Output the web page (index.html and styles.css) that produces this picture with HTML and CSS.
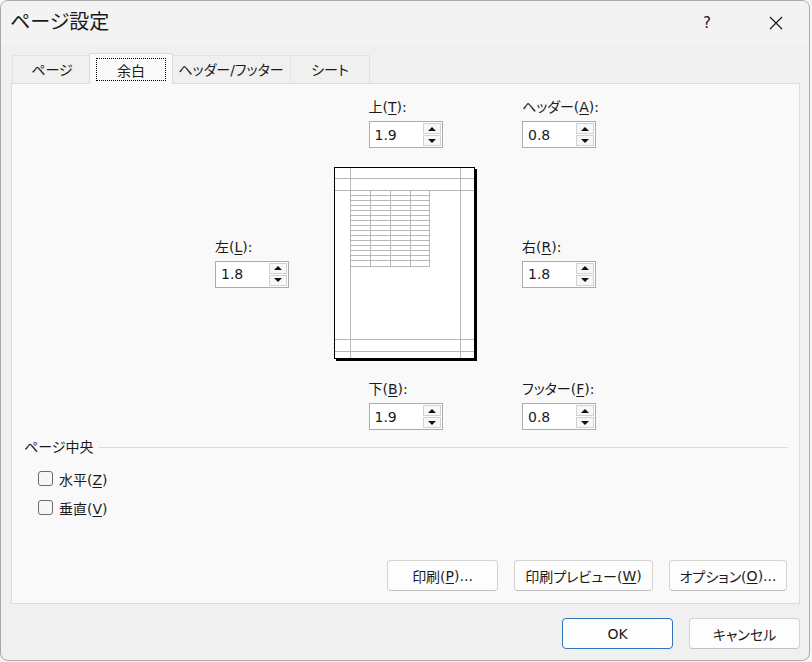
FILE: index.html
```html
<!DOCTYPE html>
<html lang="ja">
<head>
    <meta charset="UTF-8">
    <title>ページ設定</title>
    <link rel="stylesheet" href="styles.css">
</head>
<body>
    <div class="dialog">
        <div class="titlebar">
            <div class="title">ページ設定</div>
            <div class="tb-btn help">?</div>
            <div class="tb-btn close">
                <svg width="14" height="14" viewBox="0 0 14 14">
                    <path d="M1 1 L13 13 M13 1 L1 13" stroke="#1b1b1b" stroke-width="1.2" fill="none"/>
                </svg>
            </div>
        </div>

        <div class="tabs">
            <div class="tab t-page">ページ</div>
            <div class="tab sel"><span class="focus">余白</span></div>
            <div class="tab t-header">ヘッダー/フッター</div>
            <div class="tab t-sheet">シート</div>
        </div>

        <div class="panel">
            <div class="margins">
                <!-- row 1 -->
                <div></div>
                <div class="field center">
                    <label>上(<u>T</u>):</label>
                    <div class="spin"><span class="val">1.9</span><span class="arrows"><span class="up"></span><span class="down"></span></span></div>
                </div>
                <div class="field">
                    <label>ヘッダー(<u>A</u>):</label>
                    <div class="spin"><span class="val">0.8</span><span class="arrows"><span class="up"></span><span class="down"></span></span></div>
                </div>

                <!-- row 2 -->
                <div class="field mid">
                    <label>左(<u>L</u>):</label>
                    <div class="spin"><span class="val">1.8</span><span class="arrows"><span class="up"></span><span class="down"></span></span></div>
                </div>
                <svg class="preview" width="143" height="194" viewBox="0 0 143 194">
                    <rect x="0.5" y="0.5" width="140" height="191" fill="#fff"/>
                    <g stroke="#b7b7b7" stroke-width="1" fill="none" shape-rendering="crispEdges">
                        <path d="M16.5 1 V191 M126.5 1 V191 M1 11.5 H140 M1 23.5 H140 M1 172.5 H140 M1 184.5 H140"/>
                        <path d="M36.5 23 V100 M56.5 23 V100 M76.5 23 V100 M95.5 23 V100"/>
                        <path d="M16 28.5 H96 M16 33.5 H96 M16 38.5 H96 M16 43.5 H96 M16 48.5 H96 M16 53.5 H96 M16 58.5 H96 M16 63.5 H96 M16 68.5 H96 M16 73.5 H96 M16 78.5 H96 M16 83.5 H96 M16 88.5 H96 M16 93.5 H96 M16 99.5 H96"/>
                    </g>
                    <rect x="0.5" y="0.5" width="140" height="191" fill="none" stroke="#000" shape-rendering="crispEdges"/>
                    <rect x="141" y="2" width="2" height="192" fill="#000"/>
                    <rect x="2" y="192" width="141" height="2" fill="#000"/>
                </svg>
                <div class="field mid">
                    <label>右(<u>R</u>):</label>
                    <div class="spin"><span class="val">1.8</span><span class="arrows"><span class="up"></span><span class="down"></span></span></div>
                </div>

                <!-- row 3 -->
                <div></div>
                <div class="field center bottom">
                    <label>下(<u>B</u>):</label>
                    <div class="spin"><span class="val">1.9</span><span class="arrows"><span class="up"></span><span class="down"></span></span></div>
                </div>
                <div class="field bottom">
                    <label>フッター(<u>F</u>):</label>
                    <div class="spin"><span class="val">0.8</span><span class="arrows"><span class="up"></span><span class="down"></span></span></div>
                </div>
            </div>

            <div class="group">
                <div class="group-head"><span>ページ中央</span><span class="rule"></span></div>
                <div class="check first"><span class="box"></span><span>水平(<u>Z</u>)</span></div>
                <div class="check"><span class="box"></span><span>垂直(<u>V</u>)</span></div>
            </div>

            <div class="panel-buttons">
                <div class="btn b-print">印刷(<u>P</u>)...</div>
                <div class="btn b-preview">印刷プレビュー(<u>W</u>)</div>
                <div class="btn b-options">オプション(<u>O</u>)...</div>
            </div>
        </div>

        <div class="footer">
            <div class="btn ok">OK</div>
            <div class="btn">キャンセル</div>
        </div>
    </div>
</body>
</html>
```

FILE: styles.css
```css
* {
    box-sizing: border-box;
}

body {
    margin: 0;
    background-color: #f4f4f4;
    font-family: "DejaVu Sans", "Noto Sans CJK JP", sans-serif;
    font-size: 14px;
    color: #1b1b1b;
    font-feature-settings: "palt";
}

u {
    text-decoration-thickness: 1px;
    text-underline-offset: 2px;
}

.dialog {
    width: 810px;
    height: 661px;
    border: 1px solid #a9a9a9;
    border-radius: 8px;
    background-color: #f0f0f0;
    display: flex;
    flex-direction: column;
    overflow: hidden;
}

/* title bar */
.titlebar {
    height: 43px;
    flex-shrink: 0;
    background-color: #f3f3f3;
    display: flex;
    align-items: center;
    padding-left: 9px;
}

.title {
    flex: 1;
    font-size: 20px;
    line-height: 1;
    padding-bottom: 2px;
}

.tb-btn {
    width: 46px;
    height: 43px;
    display: flex;
    align-items: center;
    justify-content: center;
}

.help {
    margin-right: 23px;
    font-size: 15px;
}

.close {
    margin-right: 10px;
}

/* tabs */
.tabs {
    height: 39px;
    flex-shrink: 0;
    display: flex;
    align-items: flex-end;
    padding-left: 11px;
}

.tab {
    height: 28px;
    border: 1px solid #e2e2e2;
    border-right: none;
    border-bottom: none;
    display: flex;
    align-items: center;
    justify-content: center;
    padding-bottom: 1px;
}

.t-page { width: 79px; }
.t-header { width: 119px; }
.t-sheet { width: 80px; border-right: 1px solid #e2e2e2; }

.tab.sel {
    width: 84px;
    height: 31px;
    margin: 0 -2px -1px -2px;
    padding: 4px 6px 3px 6px;
    background-color: #f9f9f9;
    border: 1px solid #dadada;
    border-bottom: none;
    position: relative;
    z-index: 1;
}

.focus {
    flex: 1;
    align-self: stretch;
    border: 1px dotted #000;
    display: flex;
    align-items: center;
    justify-content: center;
}

/* panel */
.panel {
    height: 521px;
    flex-shrink: 0;
    margin: 0 9px 0 10px;
    border: 1px solid #dcdcdc;
    background-color: #f9f9f9;
    display: flex;
    flex-direction: column;
}

.margins {
    margin: 13px 0 0 203px;
    display: grid;
    grid-template-columns: 74px 143px 74px;
    column-gap: 45px;
}

.field {
    width: 74px;
    display: flex;
    flex-direction: column;
    gap: 4px;
}

.field label {
    line-height: 20px;
    white-space: nowrap;
}

.field.center {
    justify-self: center;
}

.field.mid {
    align-self: center;
    margin-top: 15px;
}

.field.bottom {
    margin-top: 18px;
}

.preview {
    display: block;
    margin-top: 19px;
}

.spin {
    height: 27px;
    border: 1px solid #ababab;
    background-color: #fff;
    display: flex;
    align-items: center;
    padding-left: 5px;
}

.spin .val {
    flex: 1;
    font-size: 14px;
    line-height: 1;
}

.arrows {
    width: 18px;
    height: 23px;
    margin-right: 1px;
    display: flex;
    flex-direction: column;
    gap: 1px;
}

.arrows span {
    flex: 1;
    border: 1px solid #d2d2d2;
    background-color: #f7f7f7;
    display: flex;
    align-items: center;
    justify-content: center;
}

.arrows .up::after,
.arrows .down::after {
    content: "";
    width: 0;
    height: 0;
    border-left: 4px solid transparent;
    border-right: 4px solid transparent;
}

.arrows .up::after {
    border-bottom: 4px solid #111;
}

.arrows .down::after {
    border-top: 4px solid #111;
}

/* centering group */
.group {
    margin: 7px 11px 0 12px;
}

.group-head {
    display: flex;
    align-items: center;
    line-height: 20px;
}

.group-head .rule {
    flex: 1;
    border-top: 1px solid #dcdcdc;
    margin-left: 6px;
}

.check {
    height: 29px;
    margin-left: 14px;
    display: flex;
    align-items: center;
    gap: 6px;
}

.check.first {
    margin-top: 7px;
}

.box {
    width: 15px;
    height: 15px;
    border: 1px solid #6b6b6b;
    border-radius: 3px;
    background-color: #f7f7f7;
}

/* buttons */
.panel-buttons {
    margin-top: auto;
    display: flex;
    justify-content: flex-end;
    gap: 16px;
    padding: 0 12px 12px 0;
}

.btn {
    width: 111px;
    height: 31px;
    border: 1px solid #d3d3d3;
    border-bottom-color: #c2c2c2;
    border-radius: 4px;
    background-color: #fdfdfd;
    display: flex;
    align-items: center;
    justify-content: center;
    white-space: nowrap;
}

.b-preview { width: 139px; }
.b-options { width: 118px; }

.footer {
    display: flex;
    justify-content: flex-end;
    gap: 16px;
    padding: 14px 9px 0 0;
}

.btn.ok {
    border: 1px solid #2f74b8;
}
```
